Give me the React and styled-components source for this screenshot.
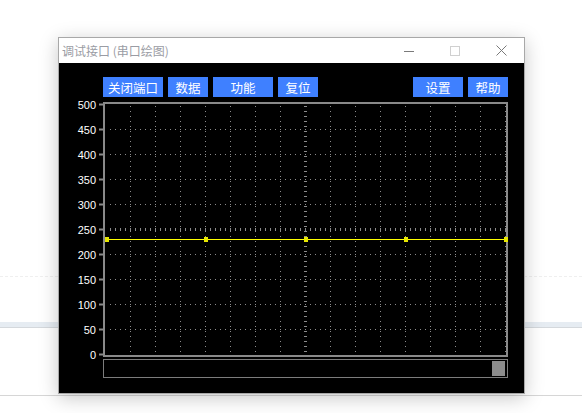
import React from 'react'
import styled, { createGlobalStyle } from 'styled-components'

const GlobalStyle = createGlobalStyle`
  html, body {
    margin: 0;
    padding: 0;
    background: #ffffff;
  }
  body {
    font-family: "Noto Sans CJK SC", "Liberation Sans", sans-serif;
  }
`;

const leftButtons = [
  { label: '关闭端口', width: 60 },
  { label: '数据', width: 40 },
  { label: '功能', width: 60 },
  { label: '复位', width: 40 },
];

const rightButtons = [
  { label: '设置', width: 50 },
  { label: '帮助', width: 40 },
];

const yTicks = [0, 50, 100, 150, 200, 250, 300, 350, 400, 450, 500];
const yPos = (v) => 257.5 - v / 2;

function Chart() {
  const vLines = [];
  for (let k = 0; k < 16; k++) vLines.push(71.5 + 25 * k);
  const dotsX = [];
  for (let x = 51.5; x < 448; x += 5) dotsX.push(x);
  const dotsY = [];
  for (let y = 9.5; y < 258; y += 5) dotsY.push(y);
  const lineY = 142.5;
  const markers = [47, 146, 246, 346, 446];

  return (
    <svg width="465" height="262" viewBox="0 0 465 262" style={{ display: 'block' }}>
      {/* horizontal dotted grid */}
      {yTicks.filter(v => v !== 0 && v !== 500).map(v => (
        v === 250 ? (
          <g key={v}>
            {dotsX.map(x => (
              <rect key={x} x={x - 0.5} y={yPos(v) - 1.5} width="1" height="3" fill="#8c8c8c" />
            ))}
          </g>
        ) : (
          <g key={v}>
            {dotsX.map(x => (
              <rect key={x} x={x - 0.5} y={yPos(v) - 0.5} width="1" height="1" fill="#8c8c8c" />
            ))}
          </g>
        )
      ))}
      {/* vertical dotted grid */}
      {vLines.map(x => (
        x === 246.5 ? (
          <g key={x}>
            {dotsY.map(y => (
              <rect key={y} x={x - 1.5} y={y - 0.5} width="3" height="1" fill="#8c8c8c" />
            ))}
          </g>
        ) : (
          <g key={x}>
            {dotsY.map(y => (
              <rect key={y} x={x - 0.5} y={y - 0.5} width="1" height="1" fill="#8c8c8c" />
            ))}
          </g>
        )
      ))}
      {/* plot frame */}
      <rect x="45" y="6" width="403" height="253" fill="none" stroke="#8a8a8a" strokeWidth="2" />
      {/* y ticks and labels */}
      {yTicks.map(v => (
        <g key={v}>
          <rect x="40" y={yPos(v) - 1} width="4" height="2" fill="#8a8a8a" />
          <text
            x="37"
            y={yPos(v) + 4}
            textAnchor="end"
            fill="#ffffff"
            fontSize="11"
            fontFamily="Liberation Sans, sans-serif"
          >
            {v}
          </text>
        </g>
      ))}
      {/* data line */}
      <line x1="46" y1={lineY} x2="447" y2={lineY} stroke="#ffff00" strokeWidth="1" />
      {markers.map(x => (
        <rect key={x} x={x - 1} y={lineY - 2.5} width="4" height="5" fill="#e6e600" />
      ))}
    </svg>
  );
}

export default function App() {
  return (
    <>
      <GlobalStyle />
      <Desktop>
        <DashedRule />
        <Band />
        <BottomRule />

        <Window>
          <TitleBar>
            <Title>调试接口 (串口绘图)</Title>
            <Controls>
              <ControlButton>
                <svg width="10" height="10" viewBox="0 0 10 10">
                  <line x1="0" y1="5.5" x2="10" y2="5.5" stroke="#7a7a7a" strokeWidth="1" />
                </svg>
              </ControlButton>
              <ControlButton>
                <svg width="10" height="10" viewBox="0 0 10 10">
                  <rect x="0.5" y="0.5" width="9" height="9" fill="none" stroke="#d0d0d0" strokeWidth="1" />
                </svg>
              </ControlButton>
              <ControlButton>
                <svg width="11" height="11" viewBox="0 0 11 11">
                  <path d="M0.5 0.5 L10.5 10.5 M10.5 0.5 L0.5 10.5" stroke="#7a7a7a" strokeWidth="1" />
                </svg>
              </ControlButton>
            </Controls>
          </TitleBar>

          <Body>
            <Toolbar>
              <ButtonGroup>
                {leftButtons.map(b => (
                  <ToolButton key={b.label} $w={b.width}>{b.label}</ToolButton>
                ))}
              </ButtonGroup>
              <ButtonGroup>
                {rightButtons.map(b => (
                  <ToolButton key={b.label} $w={b.width}>{b.label}</ToolButton>
                ))}
              </ButtonGroup>
            </Toolbar>

            <Chart />

            <ScrollTrack>
              <ScrollThumb />
            </ScrollTrack>
          </Body>
        </Window>
      </Desktop>
    </>
  );
}

const Desktop = styled.div`
  position: relative;
  width: 582px;
  height: 413px;
  overflow: hidden;
  background: #ffffff;
  display: flex;
  flex-direction: column;
`;

const DashedRule = styled.div`
  margin-top: 276px;
  height: 0;
  border-top: 1px dashed #efefef;
`;

const Band = styled.div`
  margin-top: 45px;
  height: 5px;
  background: #e6ecf2;
  border-bottom: 1px solid #d4d8dc;
`;

const BottomRule = styled.div`
  margin-top: 67px;
  height: 0;
  border-top: 1px solid #d6d6d6;
`;

const Window = styled.div`
  position: absolute;
  left: 58px;
  top: 37px;
  width: 467px;
  height: 357px;
  box-sizing: border-box;
  border: 1px solid #a8a8a8;
  background: #000000;
  display: flex;
  flex-direction: column;
  box-shadow: 0 4px 18px rgba(0, 0, 0, 0.22);
`;

const TitleBar = styled.div`
  height: 25px;
  flex: none;
  background: #ffffff;
  display: flex;
  align-items: center;
  justify-content: space-between;
`;

const Title = styled.div`
  padding-left: 3px;
  font-size: 12px;
  color: #9a9ca4;
  white-space: nowrap;
`;

const Controls = styled.div`
  display: flex;
  height: 100%;
`;

const ControlButton = styled.div`
  width: 46px;
  height: 100%;
  display: flex;
  align-items: center;
  justify-content: center;
`;

const Body = styled.div`
  flex: 1;
  display: flex;
  flex-direction: column;
  padding-top: 14px;
`;

const Toolbar = styled.div`
  height: 20px;
  display: flex;
  justify-content: space-between;
  padding: 0 16px 0 44px;
`;

const ButtonGroup = styled.div`
  display: flex;
  gap: 5px;
`;

const ToolButton = styled.div`
  width: ${p => p.$w}px;
  height: 20px;
  background: #3f80ff;
  color: #ffffff;
  font-size: 12.5px;
  display: flex;
  align-items: center;
  justify-content: center;
  white-space: nowrap;
`;

const ScrollTrack = styled.div`
  margin-left: 44px;
  width: 405px;
  height: 19px;
  box-sizing: border-box;
  border: 1px solid #7c7c7c;
  padding: 1px 2px 1px 0;
  display: flex;
  justify-content: flex-end;
`;

const ScrollThumb = styled.div`
  width: 13px;
  height: 100%;
  background: #8c8c8c;
`;
